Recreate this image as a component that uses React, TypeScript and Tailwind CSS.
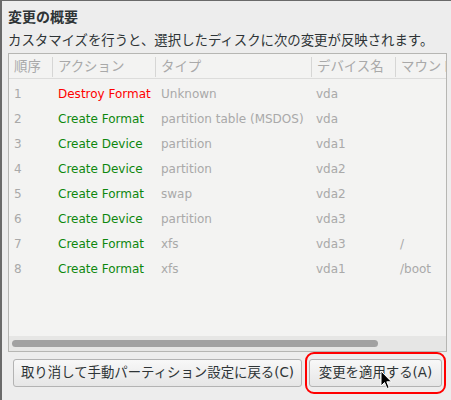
import React from "react";

const rows = [
  { n: "1", a: "Destroy Format", red: true, t: "Unknown", d: "vda", m: "" },
  { n: "2", a: "Create Format", t: "partition table (MSDOS)", d: "vda", m: "" },
  { n: "3", a: "Create Device", t: "partition", d: "vda1", m: "" },
  { n: "4", a: "Create Device", t: "partition", d: "vda2", m: "" },
  { n: "5", a: "Create Format", t: "swap", d: "vda2", m: "" },
  { n: "6", a: "Create Device", t: "partition", d: "vda3", m: "" },
  { n: "7", a: "Create Format", t: "xfs", d: "vda3", m: "/" },
  { n: "8", a: "Create Format", t: "xfs", d: "vda1", m: "/boot" },
];

const font = { fontFamily: '"DejaVu Sans", "Noto Sans CJK JP", sans-serif' };

export default function App() {
  return (
    <div
      className="relative w-[451px] h-[400px] overflow-hidden bg-[#ededed] border-t border-l-2 border-[#6a6a6a] text-[#2e3436]"
      style={font}
    >
      <div className="pl-[6px] pt-[6px] h-[22px] text-[14px] font-bold leading-[20px] text-[#2e3436]">
        変更の概要
      </div>
      <div className="pl-[6px] mt-[8px] h-[20px] text-[13.4px] leading-[20px] text-[#2e3436]">
        カスタマイズを行うと、選択したディスクに次の変更が反映されます。
      </div>
      <div className="ml-[6px] mt-[2px] w-[439px] h-[299px] border border-[#b6b6b3] bg-[#f3f3f2] flex flex-col overflow-hidden">
        <div className="grid grid-cols-[43px_103px_156px_84px_60px] h-[25px] border-b border-[#dcdcdb] text-[13.4px] text-[#a9a9a9] shrink-0">
          <div className="flex items-center pl-[5px]">順序</div>
          <div className="my-[3px] flex items-center pl-[5px] border-l border-[#d6d6d5]">アクション</div>
          <div className="my-[3px] flex items-center pl-[5px] border-l border-[#d6d6d5]">タイプ</div>
          <div className="my-[3px] flex items-center pl-[5px] border-l border-[#d6d6d5] whitespace-nowrap">デバイス名</div>
          <div className="my-[3px] flex items-center pl-[5px] border-l border-[#d6d6d5] whitespace-nowrap overflow-hidden">マウント</div>
        </div>
        <div className="flex-1 flex flex-col pt-[2px]">
          {rows.map((r) => (
            <div
              key={r.n}
              className="grid grid-cols-[43px_103px_156px_84px_60px] h-[25px] items-center text-[12px] text-[#a9a9a9] whitespace-nowrap"
            >
              <div className="pl-[5px]">{r.n}</div>
              <div className={"pl-[6px] " + (r.red ? "text-[#ff0000]" : "text-[#0d870d]")}>{r.a}</div>
              <div className="pl-[6px]">{r.t}</div>
              <div className="pl-[5px]">{r.d}</div>
              <div className="pl-[5px]">{r.m}</div>
            </div>
          ))}
        </div>
        <div className="h-[15px] bg-[#e6e6e5] shrink-0 flex items-center pl-[3px]">
          <div className="w-[366px] h-[7px] rounded-full bg-[#a1a1a1]" />
        </div>
      </div>
      <div className="flex items-center gap-[6px] mt-[6px] ml-[11px] text-[13.4px]">
        <button className="w-[289px] h-[28px] rounded-[3px] border border-[#b3b3b3] bg-gradient-to-b from-[#f8f8f8] to-[#e6e6e6] text-[#2e3436] flex items-center justify-center">
          取り消して手動パーティション設定に戻る(C)
        </button>
        <div className="rounded-[9px] border-2 border-[#ff0000] p-[2px] -ml-[3px] -my-[6px] py-[5px]">
          <button className="w-[133px] h-[28px] rounded-[3px] border border-[#b3b3b3] bg-gradient-to-b from-[#f8f8f8] to-[#e6e6e6] text-[#2e3436] flex items-center justify-center">
            変更を適用する(A)
          </button>
        </div>
      </div>
      <svg
        className="absolute left-[378px] top-[369px]"
        width="13"
        height="20"
        viewBox="0 0 13 20"
      >
        <path
          d="M1 1 L1 16 L4.5 12.5 L7 18.5 L9.2 17.5 L6.8 11.8 L11.5 11.8 Z"
          fill="#000"
          stroke="#fff"
          strokeWidth="1"
          strokeLinejoin="round"
        />
      </svg>
    </div>
  );
}
